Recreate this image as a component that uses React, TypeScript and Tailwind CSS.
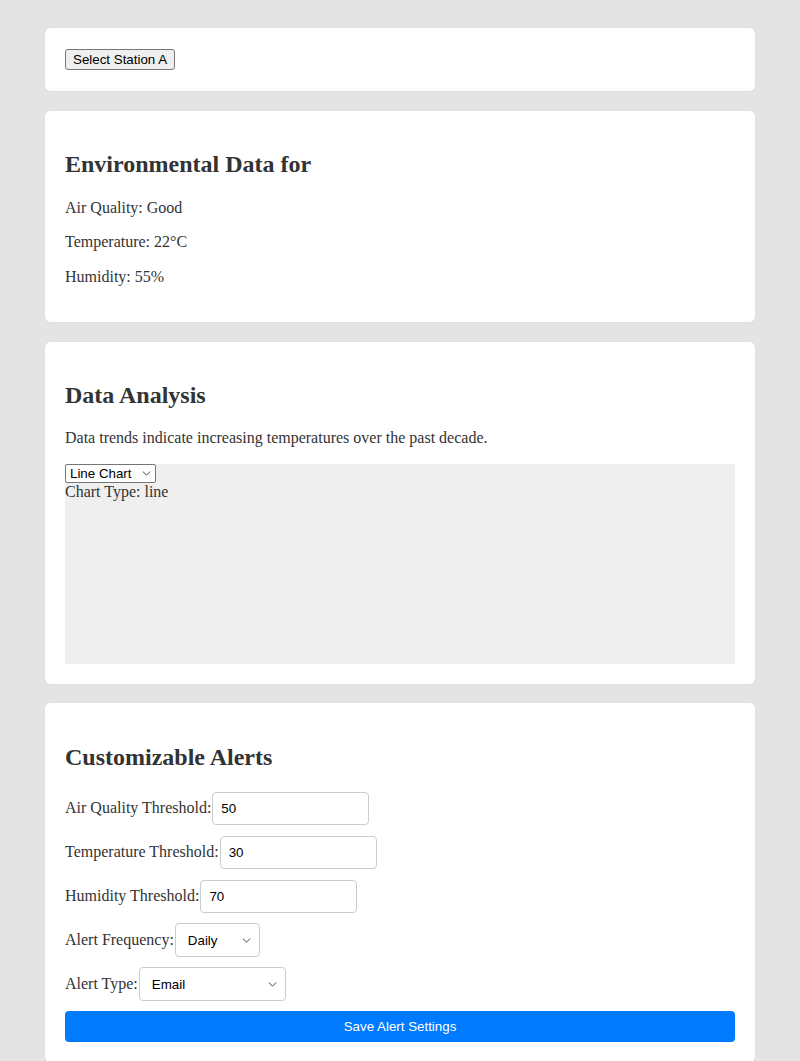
import React, { useState } from 'react';

const Chevron = ({ className }: { className: string }) => (
  <svg className={className} width="10" height="6" viewBox="0 0 10 6" fill="none">
    <path d="M1 1l4 4 4-4" stroke="#333" strokeWidth="1.1" strokeLinecap="round" strokeLinejoin="round" />
  </svg>
);

const Card = ({ children }: { children: React.ReactNode }) => (
  <div className="bg-white rounded-[5px] shadow-[0_0_1px_rgba(0,0,0,0.18)] p-5 mb-[19.5px]">
    {children}
  </div>
);

const App = () => {
  const [chartType, setChartType] = useState('line');
  const [airQuality, setAirQuality] = useState('50');
  const [temperature, setTemperature] = useState('30');
  const [humidity, setHumidity] = useState('70');
  const [frequency, setFrequency] = useState('daily');
  const [alertType, setAlertType] = useState('email');

  const inputClass =
    'h-[33px] border border-[#ccc] rounded-[4px] px-2 text-[13.33px] text-black font-["Liberation_Sans",Arial,sans-serif] outline-none';

  return (
    <div className="min-h-screen bg-[#e4e4e4] px-[45px] pt-[28px] text-[#333] text-[16px] leading-[1.15] font-['Liberation_Serif','Times_New_Roman',serif]">
      {/* Station selector */}
      <Card>
        <div className="h-[23px] pt-[1px]">
          <button className="h-[21px] px-[7px] bg-[#efefef] border border-[#767676] rounded-[3px] text-[13.33px] text-black font-['Liberation_Sans',Arial,sans-serif]">
            Select Station A
          </button>
        </div>
      </Card>

      {/* Environmental data */}
      <Card>
        <h2 className="text-[24px] leading-[28px] font-bold mt-[19.92px] mb-[20.5px]">Environmental Data for </h2>
        <p className="my-4">Air Quality: Good</p>
        <p className="my-4">Temperature: 22°C</p>
        <p className="my-4">Humidity: 55%</p>
      </Card>

      {/* Data analysis */}
      <Card>
        <h2 className="text-[24px] leading-[28px] font-bold my-[19.92px]">Data Analysis</h2>
        <p className="my-4">Data trends indicate increasing temperatures over the past decade.</p>
        <div className="h-[200px] bg-[#efefef]">
          <div className="relative inline-block">
            <select
              value={chartType}
              onChange={(e) => setChartType(e.target.value)}
              className="appearance-none h-[19px] w-[91px] pl-[4px] bg-white border border-[#767676] rounded-[2px] text-[13.33px] leading-[17px] text-black font-['Liberation_Sans',Arial,sans-serif] outline-none"
            >
              <option value="line">Line Chart</option>
              <option value="bar">Bar Chart</option>
              <option value="pie">Pie Chart</option>
            </select>
            <Chevron className="absolute right-[5px] top-[7px] pointer-events-none w-[9px] h-[5px]" />
          </div>
          <div>Chart Type: {chartType}</div>
        </div>
      </Card>

      {/* Alerts */}
      <Card>
        <h2 className="text-[24px] leading-[28px] font-bold mt-[19.92px] mb-5">Customizable Alerts</h2>
        <div className="flex items-center h-[34px] mb-[10px]">
          <label>Air Quality Threshold:</label>
          <input className={`${inputClass} w-[157px] ml-[1px]`} value={airQuality} onChange={(e) => setAirQuality(e.target.value)} />
        </div>
        <div className="flex items-center h-[34px] mb-[10px]">
          <label>Temperature Threshold:</label>
          <input className={`${inputClass} w-[157px] ml-[1px]`} value={temperature} onChange={(e) => setTemperature(e.target.value)} />
        </div>
        <div className="flex items-center h-[34px] mb-[10px]">
          <label>Humidity Threshold:</label>
          <input className={`${inputClass} w-[157px] ml-[1px]`} value={humidity} onChange={(e) => setHumidity(e.target.value)} />
        </div>
        <div className="flex items-center h-[34px] mb-[10px]">
          <label>Alert Frequency:</label>
          <div className="relative ml-[1px]">
            <select
              value={frequency}
              onChange={(e) => setFrequency(e.target.value)}
              className="appearance-none h-[34px] w-[85px] pl-3 bg-white border border-[#ccc] rounded-[4px] text-[13.33px] text-black font-['Liberation_Sans',Arial,sans-serif] outline-none"
            >
              <option value="daily">Daily</option>
              <option value="weekly">Weekly</option>
              <option value="monthly">Monthly</option>
            </select>
            <Chevron className="absolute right-[9px] top-[15px] pointer-events-none w-[9px] h-[5px]" />
          </div>
        </div>
        <div className="flex items-center h-[34px] mb-[10px]">
          <label>Alert Type:</label>
          <div className="relative ml-[1px]">
            <select
              value={alertType}
              onChange={(e) => setAlertType(e.target.value)}
              className="appearance-none h-[34px] w-[147px] pl-3 bg-white border border-[#ccc] rounded-[4px] text-[13.33px] text-black font-['Liberation_Sans',Arial,sans-serif] outline-none"
            >
              <option value="email">Email</option>
              <option value="sms">SMS</option>
              <option value="push">Push Notification</option>
            </select>
            <Chevron className="absolute right-[9px] top-[15px] pointer-events-none w-[9px] h-[5px]" />
          </div>
        </div>
        <button className="w-full h-[31px] bg-[#007bff] text-white rounded-[4px] text-[13.33px] font-['Liberation_Sans',Arial,sans-serif]">
          Save Alert Settings
        </button>
      </Card>
    </div>
  );
};

export default App;
